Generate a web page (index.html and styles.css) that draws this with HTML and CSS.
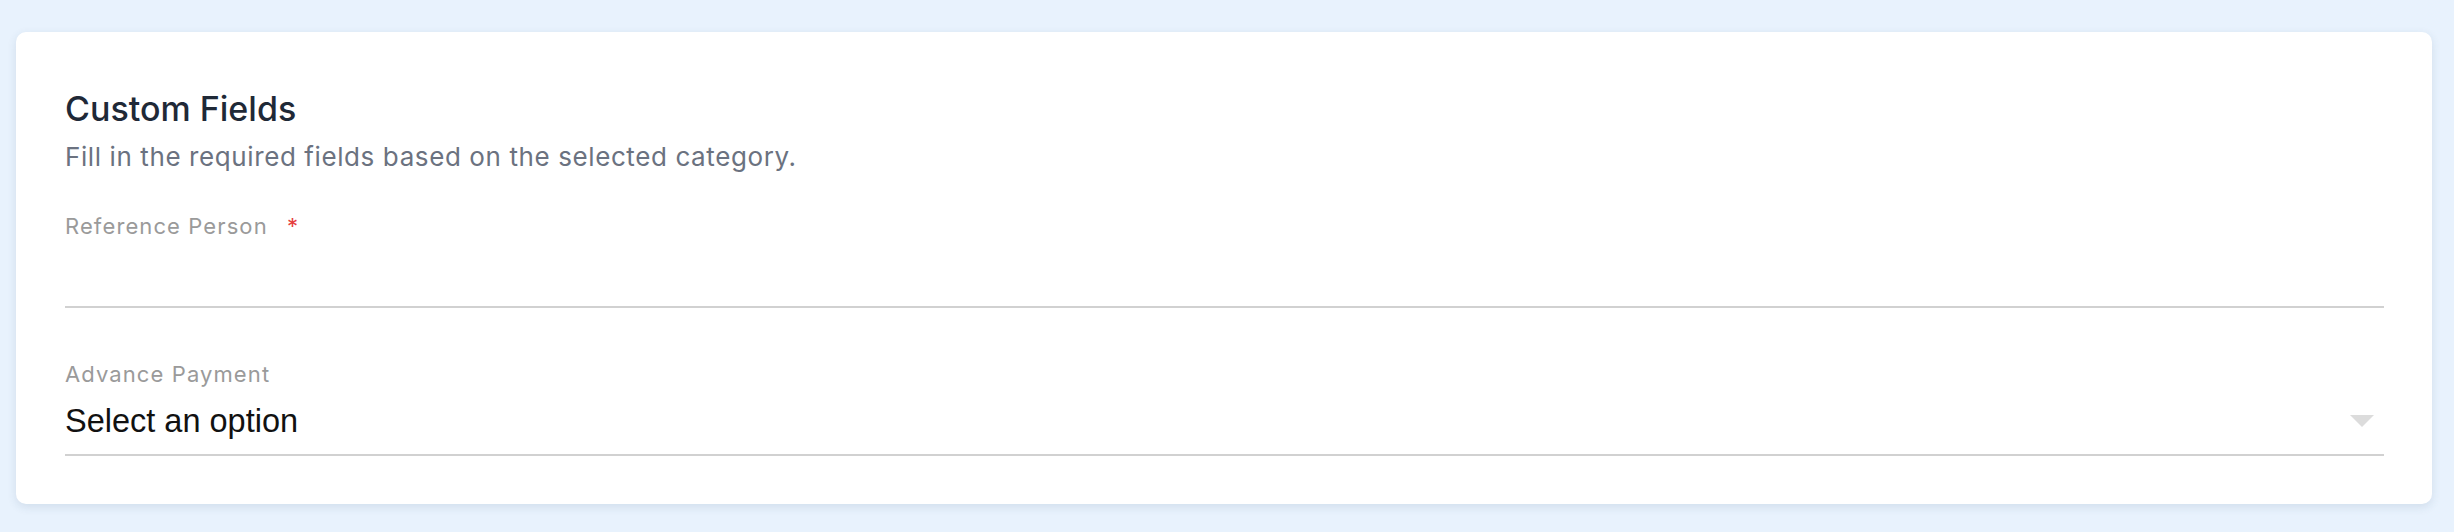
FILE: index.html
```html
<!DOCTYPE html>
<html lang="en">
<head>
<meta charset="utf-8">
<title>Custom Fields</title>
<link rel="stylesheet" href="styles.css">
</head>
<body>
<section class="card">
  <h2 class="card-title">Custom Fields</h2>
  <p class="card-subtitle">Fill in the required fields based on the selected category.</p>

  <div class="field field-first">
    <label class="field-label" for="ref-person">Reference Person <span class="required">*</span></label>
    <div class="text-input" id="ref-person"></div>
  </div>

  <div class="field">
    <label class="field-label" for="adv-payment">Advance Payment</label>
    <div class="select-input" id="adv-payment">
      <span class="select-value">Select an option</span>
      <svg class="select-arrow" width="24" height="12" viewBox="0 0 24 12" aria-hidden="true"><path d="M0 0 H24 L12 12 Z" fill="#dcdcdc"/></svg>
    </div>
  </div>
</section>
</body>
</html>
```

FILE: styles.css
```css
* { box-sizing: border-box; }

html, body {
  margin: 0;
  padding: 0;
}

body {
  background: #e8f2fd;
  padding: 32px 22px 28px 16px;
  font-family: Inter, "Noto Sans", sans-serif;
}

.card {
  background: #ffffff;
  border-radius: 10px;
  box-shadow: 0 3px 10px rgba(40, 70, 110, 0.12);
  padding: 57px 48px 48px 49px;
}

.card-title {
  margin: 0;
  font-size: 34px;
  line-height: 40px;
  font-weight: 500;
  color: #1f2937;
}

.card-subtitle {
  margin: 12px 0 0;
  font-size: 26px;
  line-height: 32px;
  letter-spacing: 0.6px;
  color: #6b7280;
}

.field {
  display: flex;
  flex-direction: column;
  margin-top: 52px;
}

.field-first {
  margin-top: 39px;
}

.field-label {
  font-size: 22px;
  line-height: 28px;
  letter-spacing: 1.1px;
  color: #9a9a9a;
}

.required {
  color: #e53e3e;
  margin-left: 12px;
}

.text-input {
  height: 68px;
  border-bottom: 2px solid #d1d1d1;
}

.select-input {
  display: flex;
  align-items: center;
  justify-content: space-between;
  height: 68px;
  padding: 13px 10px 13px 0;
  border-bottom: 2px solid #d1d1d1;
}

.select-value {
  font-family: "Liberation Sans", Arial, sans-serif;
  font-size: 32.5px;
  line-height: 40px;
  color: #111111;
}

.select-arrow {
  display: block;
}
```
